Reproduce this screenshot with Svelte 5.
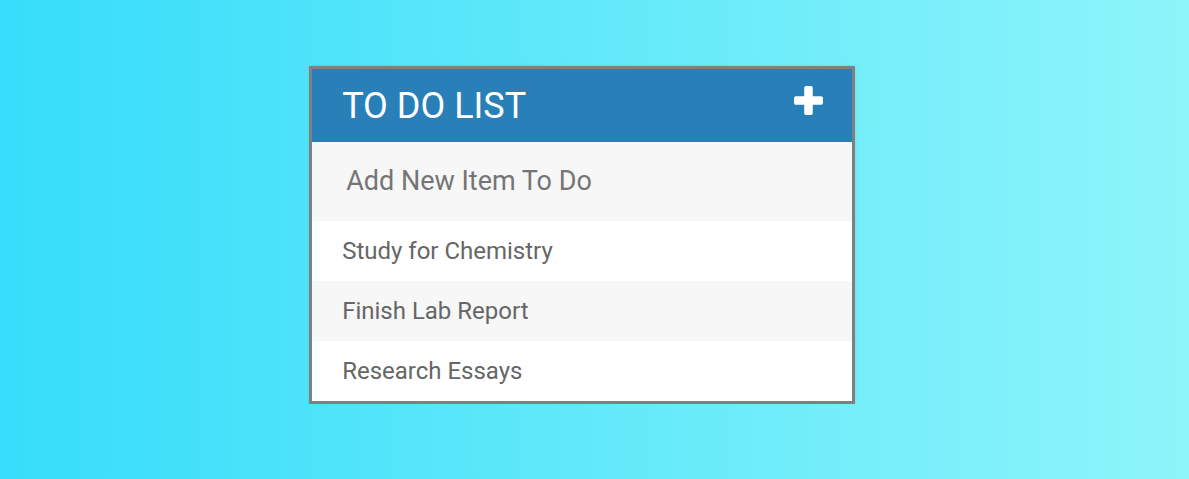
<script>
  let items = $state(['Study for Chemistry', 'Finish Lab Report', 'Research Essays']);
  let draft = $state('');
  let open = $state(true);

  function add(event) {
    event.preventDefault();
    const text = draft.trim();
    if (text) items.push(text);
    draft = '';
  }
</script>

<main class="card">
  <header>
    <h1>TO DO LIST</h1>
    <button type="button" aria-label="Toggle new item field" onclick={() => (open = !open)}>
      <svg viewBox="0 0 1408 1408" aria-hidden="true">
        <path d="M1408 592v224q0 40-28 68t-68 28H912v400q0 40-28 68t-68 28H592q-40 0-68-28t-28-68V912H96q-40 0-68-28T0 816V592q0-40 28-68t68-28h400V96q0-40 28-68t68-28h224q40 0 68 28t28 68v400h400q40 0 68 28t28 68z" />
      </svg>
    </button>
  </header>
  {#if open}
    <form onsubmit={add}>
      <input type="text" placeholder="Add New Item To Do" aria-label="Add New Item To Do" bind:value={draft} />
    </form>
  {/if}
  <ul>
    {#each items as item}
      <li>{item}</li>
    {/each}
  </ul>
</main>

<style>
  :global(html) {
    min-height: 100%;
    background: linear-gradient(to right, #36ddfa, #8ef5fa);
  }
  :global(body) {
    font-family: Roboto, sans-serif;
  }
  .card {
    box-sizing: border-box;
    width: 46%;
    min-width: 320px;
    max-width: 546px;
    margin: 66px auto 0 26%;
    border: 3px solid #808080;
    background: #f7f7f7;
    box-shadow: 0 0 3px rgba(0, 0, 0, 0.1);
  }
  header {
    display: flex;
    justify-content: space-between;
    align-items: flex-start;
    padding: 15px 29px 13px 30px;
    background: #2980b9;
    color: #fff;
  }
  h1 {
    margin: 0;
    font-size: 36px;
    font-weight: 400;
    line-height: 45px;
  }
  button {
    padding: 2px 0 0;
    border: 0;
    background: none;
    color: inherit;
    cursor: pointer;
  }
  svg {
    display: block;
    width: 29px;
    height: 29px;
    fill: currentColor;
  }
  input {
    display: block;
    box-sizing: border-box;
    width: 100%;
    height: 79px;
    padding: 0 34px 2px;
    border: 0;
    background: #f7f7f7;
    color: #2980b9;
    font: 27px/33px Roboto, sans-serif;
  }
  input::placeholder {
    color: #757575;
  }
  ul {
    margin: 0;
    padding: 0;
    list-style: none;
  }
  li {
    padding: 0 30px;
    color: #666;
    background: #fff;
    font-size: 24px;
    line-height: 60px;
  }
  li:nth-child(even) {
    background: #f7f7f7;
  }
</style>
